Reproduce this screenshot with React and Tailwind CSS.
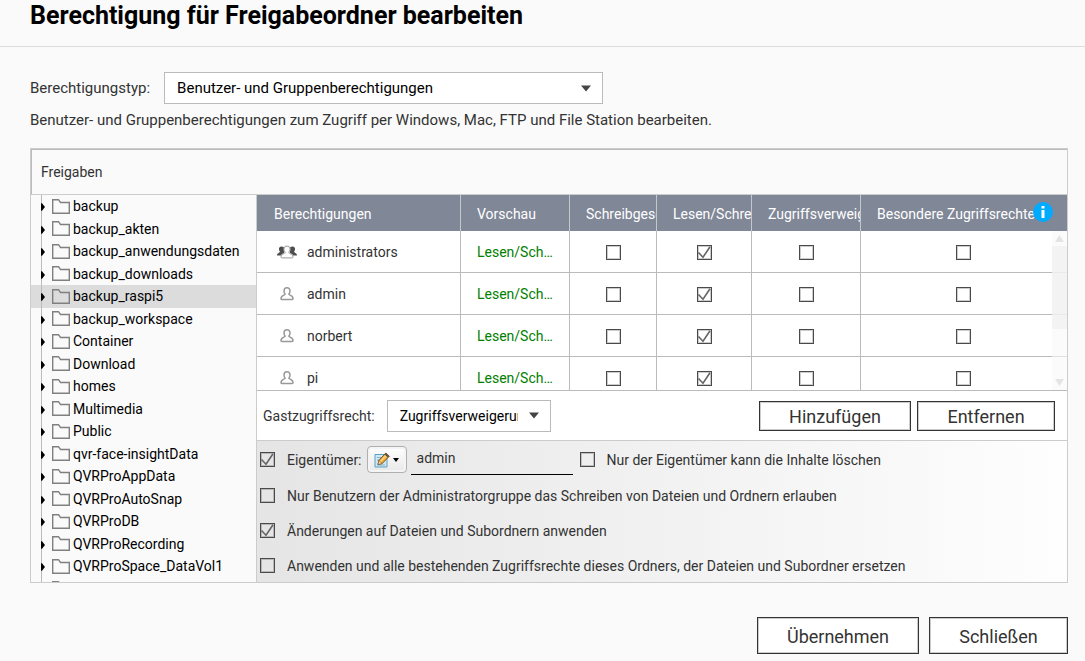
const rows = [
  { name: 'administrators', group: true },
  { name: 'admin' },
  { name: 'norbert' },
  { name: 'pi' },
];

const shares = [
  'backup',
  'backup_akten',
  'backup_anwendungsdaten',
  'backup_downloads',
  'backup_raspi5',
  'backup_workspace',
  'Container',
  'Download',
  'homes',
  'Multimedia',
  'Public',
  'qvr-face-insightData',
  'QVRProAppData',
  'QVRProAutoSnap',
  'QVRProDB',
  'QVRProRecording',
  'QVRProSpace_DataVol1',
];

const headings = ['Vorschau', 'Schreibgeschützt', 'Lesen/Schreiben', 'Zugriffsverweigerung'];

function Check({ checked = false, id, label }) {
  return (
    <span className="relative block size-[15px] shrink-0">
      <input
        type="checkbox"
        id={id}
        aria-label={label}
        defaultChecked={checked}
        className="peer block size-[15px] appearance-none border border-[#4a4a4a] bg-transparent shadow-[inset_0_0_0_1px_rgba(0,0,0,0.2)]"
      />
      <svg
        viewBox="0 0 15 15"
        className="pointer-events-none absolute inset-0 hidden size-[15px] peer-checked:block"
        fill="none"
        stroke="#666"
        strokeWidth="1.6"
      >
        <path d="M1.500 7.500 6 12.300 13 1.800" />
      </svg>
    </span>
  );
}

function FolderIcon() {
  return (
    <svg viewBox="0 0 18 15" className="h-[15px] w-[18px] shrink-0" fill="none" stroke="#808080">
      <path d="M.7 14.300V.7H6.500L8.500 3.500H17.300V14.300Z" strokeWidth="1.400" />
    </svg>
  );
}

const personPath =
  'M7 .8C4.9.8 4 2.2 4 4c0 1.500.6 2.500 1.200 3.200C5 8.300 1 8.300 1 11.400c0 .8.4 1.200 1.200 1.200h9.600c.8 0 1.200-.4 1.200-1.200 0-3.100-4-3.100-4.200-4.200C9.400 6.500 10 5.500 10 4 10 2.200 9.100.8 7 .8Z';

function UserIcon() {
  return (
    <svg viewBox="0 0 14 14" className="size-[14px]" fill="#fff" stroke="#999" strokeWidth="1.500">
      <path d={personPath} />
    </svg>
  );
}

function GroupIcon() {
  return (
    <svg viewBox="0 0 22 14" className="h-[14px] w-[22px]">
      <g fill="#4d4d4d">
        <path d="M5.500 1.500c-2 0-2.800 1.400-2.500 3 .1 1 .5 1.500.9 2C3.600 8 1 8 1 10.500h7V2.500C7.300 1.800 6.500 1.500 5.500 1.500Z" />
        <path d="M16.500 1.500c2 0 2.800 1.400 2.500 3-.1 1-.5 1.500-.9 2 .3 1.500 2.900 1.500 2.900 4h-7v-8c.7-.7 1.500-1 2.500-1Z" />
      </g>
      <path d={personPath} transform="translate(4 .3)" fill="#fff" stroke="#b0b0b0" strokeWidth="1.200" />
    </svg>
  );
}

function Caret() {
  return (
    <svg viewBox="0 0 10 7" className="pointer-events-none absolute right-3 h-[7px] w-[10px]" fill="#444">
      <path d="M0 .5H10L5 6.500Z" />
    </svg>
  );
}

function EditIcon() {
  return (
    <svg viewBox="0 0 16 16" className="size-4" fill="none">
      <path d="M1 2.500h12v12.500H1Z" fill="#cfe8f5" stroke="#5aa0c0" />
      <path d="M3 5.500h6M3 8h4M3 13h8" stroke="#7fb4cc" />
      <path d="M4 12.500 4.800 8.500 11.800 1 15.300 4.200 8.200 11.500Z" fill="#f6ac35" stroke="#7a5322" />
      <path d="M6 10 13.200 2.500" stroke="#ffd98a" strokeWidth="1.200" />
      <path d="M11.800 1 15.300 4.200 13.900 5.600 10.500 2.400Z" fill="#5c5650" />
      <path d="M4 12.500 4.800 8.500 8.200 11.500Z" fill="#f5deb0" stroke="#7a5322" strokeWidth=".6" />
    </svg>
  );
}

function ShareRow({ name, selected }) {
  return (
    <button
      type="button"
      aria-label={name ? undefined : 'Weitere Freigaben'}
      className={
        selected
          ? 'flex h-full w-full items-center bg-[#dcdcdc] pl-[10px]'
          : 'flex h-full w-full items-center pl-[10px]'
      }
    >
      <span className="flex h-full items-center border-l border-[#bbb] pt-[2px] pr-[7px]">
        <svg viewBox="0 0 4 8" className="-ml-px h-2 w-1">
          <path d="M0 .3H1L4 4 1 7.700H0Z" />
        </svg>
      </span>
      <FolderIcon />
      {name && <span className="pl-[3px]">{name}</span>}
    </button>
  );
}

function Option({ id, checked, children }) {
  return (
    <div className="flex h-[35px] items-center gap-3">
      <Check id={id} checked={checked} />
      <label htmlFor={id}>{children}</label>
    </div>
  );
}

export default function App() {
  return (
    <main className="min-h-screen overflow-hidden bg-[#fafafa] font-[Roboto,'Liberation_Sans',sans-serif] text-sm text-[#333]">
      <header className="h-[47px] border-b border-[#ddd] px-[30px]">
        <h1 className="text-[25px] leading-8 font-bold text-black">Berechtigung für Freigabeordner bearbeiten</h1>
      </header>

      <div className="pr-[17px] pl-[30px]">
        <div className="flex items-center gap-[14px] pt-[25px] text-[15px]">
          <label htmlFor="type" className="pt-px">
            Berechtigungstyp:
          </label>
          <div className="relative flex w-[439px] items-center">
            <select
              id="type"
              className="h-8 w-full appearance-none border border-[#bbb] bg-white px-3 pt-px text-black"
            >
              <option>Benutzer- und Gruppenberechtigungen</option>
            </select>
            <Caret />
          </div>
        </div>
        <p className="pt-[6px] text-[15px] leading-5">
          Benutzer- und Gruppenberechtigungen zum Zugriff per Windows, Mac, FTP und File Station bearbeiten.
        </p>

        <section className="mt-[18px] border border-[#ccc]">
          <h2 className="h-[46px] border-t border-b border-l border-[#bbb] border-b-[#ccc] pl-[9px] leading-[44px]">
            Freigaben
          </h2>
          <div className="flex h-[387px]">
            <nav className="w-[226px] shrink-0 overflow-hidden border-r border-[#ccc]">
              <ul className="grid h-[405px] auto-rows-fr text-black">
                {shares.map((share) => (
                  <li key={share}>
                    <ShareRow name={share} selected={share === 'backup_raspi5'} />
                  </li>
                ))}
                <li>
                  <ShareRow />
                </li>
              </ul>
            </nav>

            <div className="flex min-w-0 flex-1 flex-col bg-white">
              <div className="relative h-[196px] shrink-0 overflow-hidden border-b border-[#bbb]">
                <table className="w-full table-fixed border-separate border-spacing-0">
                  <colgroup>
                    <col className="w-[204px]" />
                    <col className="w-[109px]" />
                    <col className="w-[87px]" />
                    <col className="w-[95px]" />
                    <col className="w-[109px]" />
                    <col />
                  </colgroup>
                  <thead>
                    <tr className="h-9 bg-[#808797] text-left whitespace-nowrap text-white">
                      <th className="border-r border-[#c4c7ce] p-0 pt-[2px] pl-[17px] font-normal">Berechtigungen</th>
                      {headings.map((heading) => (
                        <th
                          key={heading}
                          className="overflow-hidden border-r border-[#c4c7ce] p-0 pt-[2px] pl-4 font-normal"
                        >
                          {heading}
                        </th>
                      ))}
                      <th className="p-0 pl-4 font-normal">
                        <span className="flex items-center">
                          <span className="pt-[2px]">Besondere Zugriffsrechte</span>
                          <svg viewBox="0 0 20 20" className="mb-[2px] -ml-[2px] size-5">
                            <circle cx="10" cy="10" r="10" fill="#00aaff" />
                            <path d="M8.500 4h3v2.500h-3ZM8.500 8h3v8h-3Z" fill="#fff" />
                          </svg>
                        </span>
                      </th>
                    </tr>
                  </thead>
                  <tbody>
                    {rows.map(({ name, group }) => (
                      <tr key={name} className="h-[42px]">
                        <td className="border-r border-b border-[#bbb] p-0">
                          <div className="flex items-center">
                            <span className="flex w-[50px] justify-center pl-[10px]">
                              {group ? <GroupIcon /> : <UserIcon />}
                            </span>
                            {name}
                          </div>
                        </td>
                        <td className="border-r border-b border-[#bbb] p-0 pl-4 text-[#008000]">Lesen/Sch…</td>
                        {[
                          ['Schreibgeschützt', false],
                          ['Lesen/Schreiben', true],
                          ['Zugriffsverweigerung', false],
                        ].map(([label, checked]) => (
                          <td key={label} className="border-r border-b border-[#bbb] p-0 pt-px">
                            <div className="flex justify-center">
                              <Check checked={checked} label={`${name}: ${label}`} />
                            </div>
                          </td>
                        ))}
                        <td className="border-b border-[#bbb] p-0 pt-px pr-[2px]">
                          <div className="flex justify-center">
                            <Check label={`${name}: Besondere Zugriffsrechte`} />
                          </div>
                        </td>
                      </tr>
                    ))}
                  </tbody>
                </table>
                <div className="absolute top-9 right-0 bottom-0 flex w-[15px] flex-col items-center bg-[#f8f8f8]/60">
                  <svg viewBox="0 0 15 15" className="size-[15px]" fill="#e4e4e4">
                    <path d="M3 11 7.500 4 12 11Z" />
                  </svg>
                  <span className="h-[83px] w-full bg-[#eee]/60" />
                  <svg viewBox="0 0 15 15" className="mt-auto size-[15px]" fill="#e4e4e4">
                    <path d="M3 4 7.500 11 12 4Z" />
                  </svg>
                </div>
              </div>

              <div className="flex h-[50px] shrink-0 items-center border-b border-[#ccc] pr-3 pl-[6px]">
                <label htmlFor="guest">Gastzugriffsrecht:</label>
                <div className="relative ml-3 flex w-[164px] items-center">
                  <select
                    id="guest"
                    className="h-8 w-full appearance-none overflow-hidden border border-[#bbb] bg-white pr-8 pl-3 text-black"
                  >
                    <option>Zugriffsverweigerung</option>
                  </select>
                  <Caret />
                </div>
                <div className="ml-auto flex gap-[6px] text-lg">
                  <button
                    type="button"
                    className="h-[30px] w-[152px] border border-[#333] bg-white pt-px leading-7 shadow-[inset_0_0_0_1px_#ccc]"
                  >
                    Hinzufügen
                  </button>
                  <button
                    type="button"
                    className="h-[30px] w-[138px] border border-[#333] bg-white pt-px leading-7 shadow-[inset_0_0_0_1px_#ccc]"
                  >
                    Entfernen
                  </button>
                </div>
              </div>

              <div className="min-h-0 flex-1 bg-linear-to-r from-[#e5e5e5] to-[#fefefe] pl-[3px]">
                <div className="flex h-[37px] items-center">
                  <Check id="owner-on" checked />
                  <label htmlFor="owner-on" className="pl-3">
                    Eigentümer:
                  </label>
                  <button
                    type="button"
                    aria-label="Eigentümer auswählen"
                    className="ml-[5px] flex h-[27px] w-10 shrink-0 items-center justify-center gap-[3px] rounded border border-[#b0b0b0] bg-linear-to-b from-white to-[#e8e8e8] shadow-[inset_0_0_0_2px_#f4f4f4]"
                  >
                    <EditIcon />
                    <svg viewBox="0 0 6 4" className="h-1 w-[6px]">
                      <path d="M0 0H6L3 4Z" />
                    </svg>
                  </button>
                  <input
                    aria-label="Eigentümer"
                    defaultValue="admin"
                    className="mr-[7px] ml-1 h-[31px] w-[162px] border-b border-black bg-transparent px-[6px] pb-[2px]"
                  />
                  <Check id="owner-delete" />
                  <label htmlFor="owner-delete" className="pl-3">
                    Nur der Eigentümer kann die Inhalte löschen
                  </label>
                </div>
                <Option id="admins-only">
                  Nur Benutzern der Administratorgruppe das Schreiben von Dateien und Ordnern erlauben
                </Option>
                <Option id="apply-sub" checked>
                  Änderungen auf Dateien und Subordnern anwenden
                </Option>
                <Option id="replace-all">
                  Anwenden und alle bestehenden Zugriffsrechte dieses Ordners, der Dateien und Subordner ersetzen
                </Option>
              </div>
            </div>
          </div>
        </section>

        <footer className="flex justify-end gap-[10px] pt-[34px] text-lg">
          <button
            type="button"
            className="h-[37px] w-[162px] border border-[#333] bg-white pt-[2px] shadow-[inset_0_0_0_1px_#ccc]"
          >
            Übernehmen
          </button>
          <button
            type="button"
            className="h-[37px] w-[139px] border border-[#333] bg-white pt-[2px] shadow-[inset_0_0_0_1px_#ccc]"
          >
            Schließen
          </button>
        </footer>
      </div>
    </main>
  );
}
